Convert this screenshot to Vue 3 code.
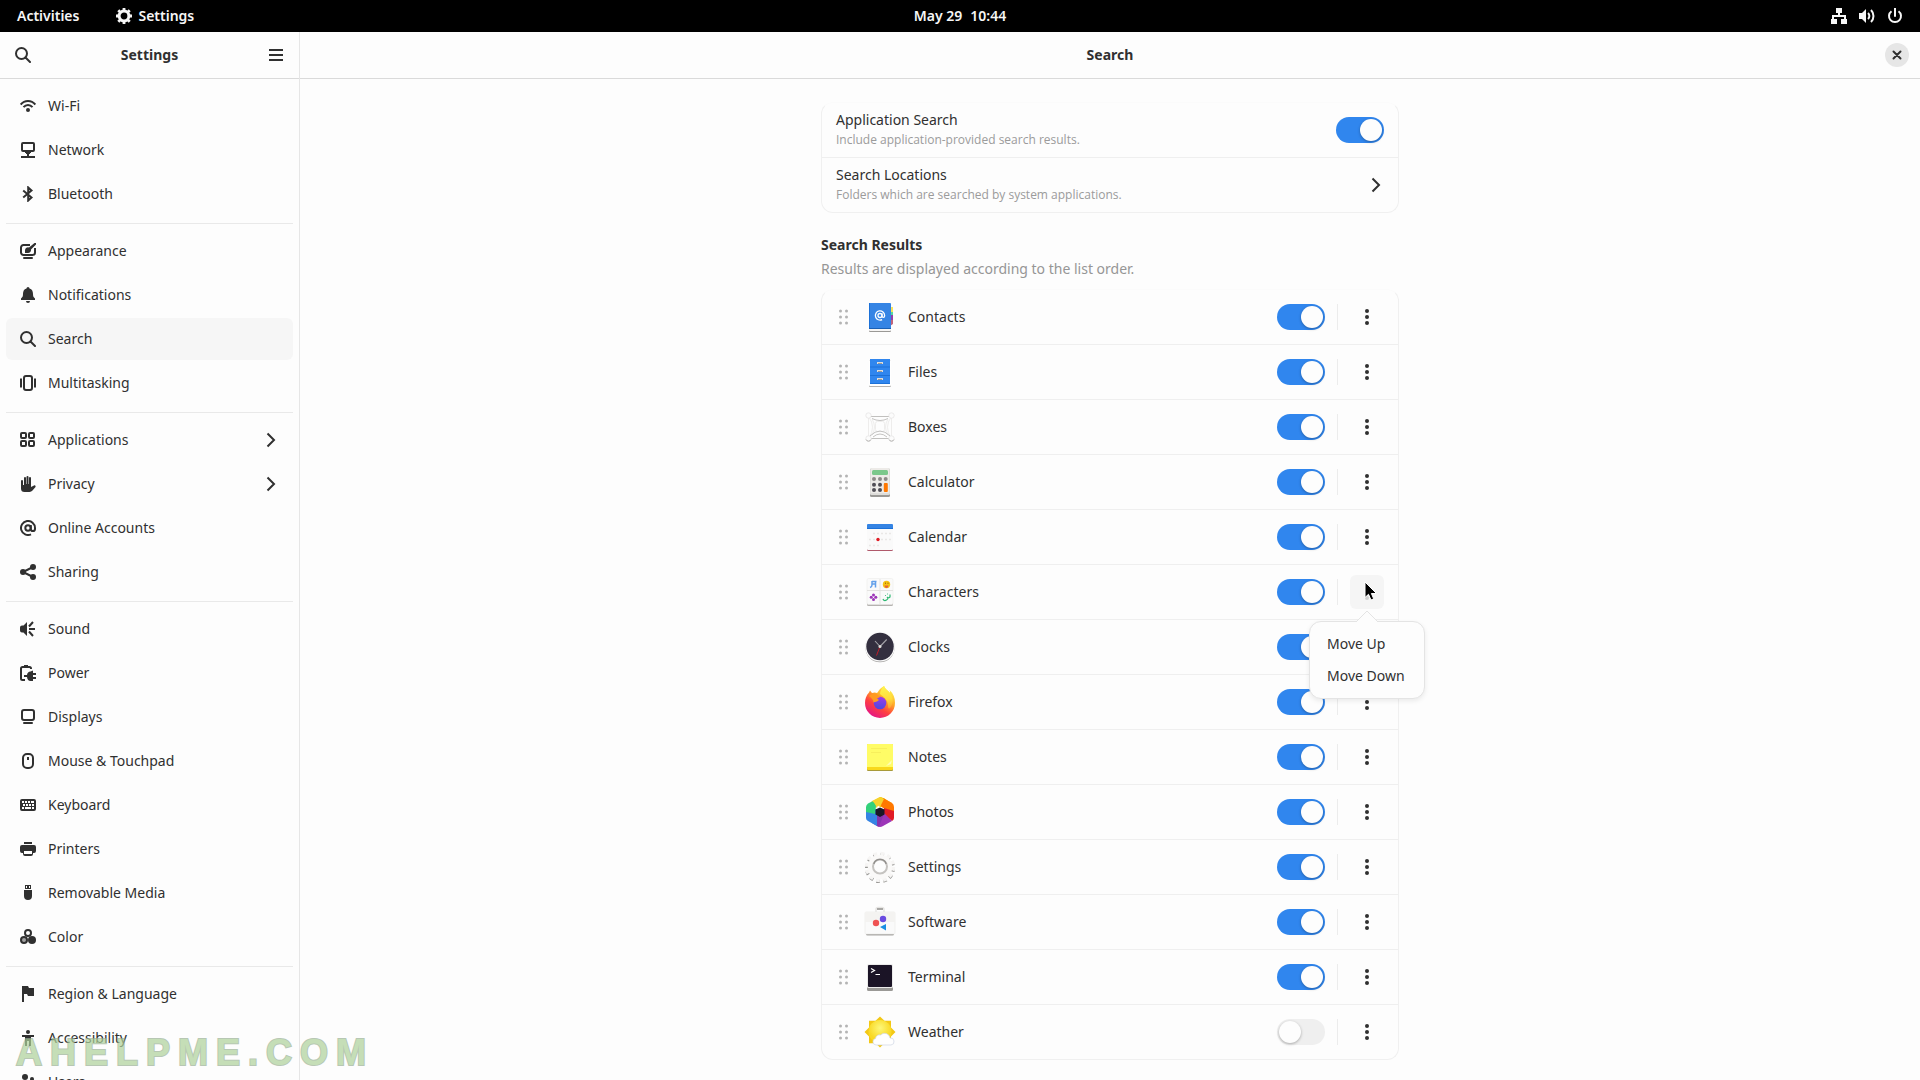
<template>
  <div class="desktop">
    <header class="topbar">
      <div class="topbar-left">
        <button type="button" class="topbar-button">Activities</button>
        <button type="button" class="topbar-button">
          <svg class="icon" viewBox="0 0 16 16" v-html="icons.gear"></svg>
          Settings
        </button>
      </div>
      <button type="button" class="topbar-button clock">
        <span>May 29</span>
        <span>10:44</span>
      </button>
      <div class="topbar-right">
        <svg v-for="name in ['wired', 'volume', 'shutdown']" :key="name" class="icon" viewBox="0 0 16 16" v-html="icons[name]"></svg>
      </div>
    </header>

    <div class="window">
      <aside class="sidebar">
        <div class="headerbar sidebar-header">
          <button type="button" class="flat-button" aria-label="Search settings">
            <svg class="icon" viewBox="0 0 16 16" v-html="icons.search"></svg>
          </button>
          <h1 class="title">Settings</h1>
          <button type="button" class="flat-button" aria-label="Main menu">
            <svg class="icon" viewBox="0 0 16 16" v-html="icons.menu"></svg>
          </button>
        </div>
        <nav class="panels">
          <div v-for="(group, index) in panels" :key="index" class="panel-group">
            <a
              v-for="panel in group"
              :key="panel.label"
              href="#"
              class="panel-link"
              :class="{ active: panel.label === activePanel }"
              @click.prevent="activePanel = panel.label"
            >
              <svg class="icon" viewBox="0 0 16 16" v-html="icons[panel.icon]"></svg>
              <span class="panel-label">{{ panel.label }}</span>
              <svg v-if="panel.children" class="icon" viewBox="0 0 16 16" v-html="icons.chevron"></svg>
            </a>
          </div>
        </nav>
      </aside>

      <main class="content">
        <div class="headerbar content-header">
          <h2 class="title">Search</h2>
          <button type="button" class="close-button" aria-label="Close">
            <svg class="icon" viewBox="0 0 16 16" v-html="icons.close"></svg>
          </button>
        </div>

        <div class="page">
          <section class="card">
            <div class="row">
              <label class="row-text" for="app-search">
                <span class="row-title">Application Search</span>
                <span class="row-subtitle">Include application-provided search results.</span>
              </label>
              <input id="app-search" v-model="appSearch" type="checkbox" role="switch" class="switch" />
            </div>
            <a href="#" class="row" @click.prevent>
              <span class="row-text">
                <span class="row-title">Search Locations</span>
                <span class="row-subtitle">Folders which are searched by system applications.</span>
              </span>
              <svg class="icon" viewBox="0 0 16 16" v-html="icons.chevron"></svg>
            </a>
          </section>

          <div class="section-head">
            <h3 class="section-title">Search Results</h3>
            <p class="section-text">Results are displayed according to the list order.</p>
          </div>

          <section class="card">
            <div v-for="(app, index) in apps" :key="app.name" class="row">
              <svg class="icon grip" viewBox="0 0 16 16" v-html="icons.grip"></svg>
              <svg class="app-icon" viewBox="0 0 32 32" v-html="appIcons[app.name]"></svg>
              <label class="app-name" :for="'app-' + index">{{ app.name }}</label>
              <input :id="'app-' + index" v-model="app.enabled" type="checkbox" role="switch" class="switch" />
              <span class="divider"></span>
              <div class="menu">
                <button
                  type="button"
                  class="menu-button"
                  :class="{ open: openMenu === app.name }"
                  :aria-label="app.name + ' options'"
                  @click="toggleMenu(app.name)"
                >
                  <svg class="icon" viewBox="0 0 16 16" v-html="icons.more"></svg>
                </button>
                <div v-if="openMenu === app.name" class="popover">
                  <svg class="popover-arrow" viewBox="0 0 22 12">
                    <path d="M0 12L11 1L22 12" fill="#fdfdfd" stroke="#e4e4e4" />
                  </svg>
                  <button type="button" class="popover-item" @click="move(index, -1)">Move Up</button>
                  <button type="button" class="popover-item" @click="move(index, 1)">Move Down</button>
                </div>
                <svg v-if="openMenu === app.name" class="pointer" viewBox="0 0 14 20">
                  <path d="M1 1V16.500L4.500 13.300L7 19L9.700 17.800L7.400 12.500H12.500Z" fill="#000" stroke="#fff" />
                </svg>
              </div>
            </div>
          </section>
        </div>
      </main>
    </div>

    <div class="watermark">AHELPME.COM</div>
  </div>
</template>

<script setup>
import { ref } from 'vue';

const activePanel = ref('Search');
const appSearch = ref(true);
const openMenu = ref('Characters');

const panels = [
  [
    { label: 'Wi-Fi', icon: 'wifi' },
    { label: 'Network', icon: 'network' },
    { label: 'Bluetooth', icon: 'bluetooth' },
  ],
  [
    { label: 'Appearance', icon: 'appearance' },
    { label: 'Notifications', icon: 'bell' },
    { label: 'Search', icon: 'search' },
    { label: 'Multitasking', icon: 'multitasking' },
  ],
  [
    { label: 'Applications', icon: 'grid', children: true },
    { label: 'Privacy', icon: 'hand', children: true },
    { label: 'Online Accounts', icon: 'at' },
    { label: 'Sharing', icon: 'share' },
  ],
  [
    { label: 'Sound', icon: 'sound' },
    { label: 'Power', icon: 'power' },
    { label: 'Displays', icon: 'display' },
    { label: 'Mouse & Touchpad', icon: 'mouse' },
    { label: 'Keyboard', icon: 'keyboard' },
    { label: 'Printers', icon: 'printer' },
    { label: 'Removable Media', icon: 'usb' },
    { label: 'Color', icon: 'color' },
  ],
  [
    { label: 'Region & Language', icon: 'flag' },
    { label: 'Accessibility', icon: 'person' },
    { label: 'Users', icon: 'users' },
  ],
];

const apps = ref([
  { name: 'Contacts', enabled: true },
  { name: 'Files', enabled: true },
  { name: 'Boxes', enabled: true },
  { name: 'Calculator', enabled: true },
  { name: 'Calendar', enabled: true },
  { name: 'Characters', enabled: true },
  { name: 'Clocks', enabled: true },
  { name: 'Firefox', enabled: true },
  { name: 'Notes', enabled: true },
  { name: 'Photos', enabled: true },
  { name: 'Settings', enabled: true },
  { name: 'Software', enabled: true },
  { name: 'Terminal', enabled: true },
  { name: 'Weather', enabled: false },
]);

const toggleMenu = (name) => {
  openMenu.value = openMenu.value === name ? '' : name;
};

const move = (index, step) => {
  const target = index + step;
  if (target >= 0 && target < apps.value.length) {
    const [app] = apps.value.splice(index, 1);
    apps.value.splice(target, 0, app);
  }
  openMenu.value = '';
};

const line = 'fill="none" stroke="currentColor" stroke-width="2"';

// 16px symbolic icons
const icons = {
  gear: `<circle cx="8" cy="8" r="4.900" fill="none" stroke="currentColor" stroke-width="3"/><path d="M8 0V3M8 13V16M0 8H3M13 8H16M2.300 2.300L4.500 4.500M11.500 11.500L13.700 13.700M2.300 13.700L4.500 11.500M11.500 4.500L13.700 2.300" fill="none" stroke="currentColor" stroke-width="2.800"/>`,
  wired: '<path d="M5 0h6v5H9v2h6v4h1v5h-6v-5h3V9H3v2h3v5H0v-5h1V7h6V5H5z" fill="currentColor"/>',
  volume: `<path d="M0 5h3l4-4v14l-4-4H0z" fill="currentColor"/><path d="M9 5a4 4 0 0 1 0 6" ${line}/><path d="M12 2a8.500 8.500 0 0 1 0 12" ${line}/>`,
  shutdown: `<path d="M4.500 3.200a6 6 0 1 0 7 0" ${line}/><path d="M8 0.500V8" ${line} stroke-linecap="round"/>`,
  search: `<circle cx="6.500" cy="6.500" r="5.500" ${line}/><path d="M10.500 10.500L15 15" ${line} stroke-linecap="round"/>`,
  menu: `<path d="M1 3h14M1 8h14M1 13h14" ${line}/>`,
  close: `<path d="M4.500 4.500l7 7M11.500 4.500l-7 7" ${line} stroke-linecap="round"/>`,
  chevron: `<path d="M4.500 1.500L11 8L4.500 14.500" ${line}/>`,
  more: '<g fill="currentColor"><circle cx="8" cy="2" r="2"/><circle cx="8" cy="8" r="2"/><circle cx="8" cy="14" r="2"/></g>',
  grip: '<g fill="currentColor"><circle cx="4.500" cy="2" r="1.500"/><circle cx="10.500" cy="2" r="1.500"/><circle cx="4.500" cy="8" r="1.500"/><circle cx="10.500" cy="8" r="1.500"/><circle cx="4.500" cy="14" r="1.500"/><circle cx="10.500" cy="14" r="1.500"/></g>',
  wifi: `<path d="M0.700 6.500C4.500 1.800 11.500 1.800 15.300 6.500" ${line}/><path d="M3.500 9.200C6 6.200 10 6.200 12.500 9.200" ${line}/><circle cx="8" cy="12" r="2" fill="currentColor"/>`,
  network: `<rect x="2" y="1" width="12" height="8" rx="1" ${line}/><path d="M5 9h6v2h-1v1H6v-1H5z" fill="currentColor"/><path d="M8 11V15M1 15H15" ${line}/>`,
  bluetooth: `<path d="M3.200 4.500L11.500 11.500L8.200 14.500V1.500L11.500 4.500L3.200 11.500" ${line}/>`,
  appearance: `<path d="M10 2H3.500A2.500 2.500 0 0 0 1 4.500v5A2.500 2.500 0 0 0 3.500 12h9A2.500 2.500 0 0 0 15 9.500V5" ${line}/><path d="M5 10V7a3 3 0 0 1 4-2.500L14.500 0H16v1.500L11 6.500A3 3 0 0 1 8 10z" fill="currentColor"/><path d="M4 15h8" ${line} stroke-linecap="round"/>`,
  bell: '<path d="M8 0a1.500 1.500 0 0 0-1.500 1.500C3.800 2.200 3 4.500 3 7c0 2.500-.5 3-2 4.500V13h14v-1.500C13.500 10 13 9.500 13 7c0-2.500-.8-4.800-3.500-5.500A1.500 1.500 0 0 0 8 0zM6 14a2 2 0 0 0 4 0z" fill="currentColor"/>',
  multitasking: `<rect x="4" y="1" width="8" height="14" rx="2" ${line}/><path d="M1 3.500v9M15 3.500v9" ${line}/>`,
  grid: `<g ${line}><rect x="1" y="1" width="5" height="5" rx="1"/><rect x="9" y="1" width="5" height="5" rx="1"/><rect x="1" y="9" width="5" height="5" rx="1"/><rect x="9" y="9" width="5" height="5" rx="1"/></g>`,
  hand: '<path d="M1 5a1 1 0 0 1 2 0v4h1V2a1 1 0 0 1 2 0v6h.5V1a1 1 0 0 1 2 0v7H9V2a1 1 0 0 1 2 0v9l3-1.500c1-.5 2 .5 1.500 1.500L12.500 14.500A4 4 0 0 1 9.500 16H4.500A3.500 3.500 0 0 1 1 12.500z" fill="currentColor"/>',
  at: `<circle cx="8" cy="8" r="2.700" ${line}/><path d="M10.800 5V9a2 2 0 0 0 4.200 0V8a7 7 0 1 0-4 6.300" ${line}/>`,
  share: `<path d="M13 3L3 8L13 13" ${line}/><g fill="currentColor"><circle cx="13" cy="3" r="3"/><circle cx="3" cy="8" r="3"/><circle cx="13" cy="13" r="3"/></g>`,
  sound: `<path d="M2 4.500h1.500L7 1v14L3.500 11.500H2A2 2 0 0 1 0 9.500v-3a2 2 0 0 1 2-2z" fill="currentColor"/><path d="M9 5.500L13 1M9 8h6M9 10.500L13 15" ${line}/>`,
  power: `<path d="M11 4V3.500A1.500 1.500 0 0 0 9.500 2h-7A1.500 1.500 0 0 0 1 3.500v10A1.500 1.500 0 0 0 2.500 15H5" ${line}/><path d="M4 0h4v2H4zM4 10h3c.3-2 1.500-3.500 3.500-3.500L13 5.500V8h3v2h-3v2h3v2h-3v2h-2.500C8.500 16 7.300 14.500 7 12H4z" fill="currentColor"/>`,
  display: `<rect x="2" y="1" width="12" height="10" rx="2" ${line}/><path d="M4 14h8" ${line} stroke-linecap="round"/>`,
  mouse: `<rect x="3" y="1" width="10" height="14" rx="4" ${line}/><path d="M8 4v3" ${line}/>`,
  keyboard: '<path fill-rule="evenodd" d="M2 2h12a2 2 0 0 1 2 2v8a2 2 0 0 1-2 2H2a2 2 0 0 1-2-2V4a2 2 0 0 1 2-2zM2 4v2h2V4zm3 0v2h2V4zm3 0v2h2V4zm3 0v2h3V4zM3 7v2h2V7zm3 0v2h2V7zm3 0v2h2V7zm3 0v2h2V7zM2 10v2h2v-2zm3 0v2h6v-2zm7 0v2h2v-2z" fill="currentColor"/>',
  printer: '<path fill-rule="evenodd" d="M4 1h8v2H4zM2 4h12a2 2 0 0 1 2 2v4a2 2 0 0 1-2 2h-1v1a2 2 0 0 1-2 2H5a2 2 0 0 1-2-2v-1H2a2 2 0 0 1-2-2V6a2 2 0 0 1 2-2zM4 10v3h8v-3z" fill="currentColor"/>',
  usb: '<path fill-rule="evenodd" d="M5 0h6v4H5zM6 1v2h1V1zm3 0v2h1V1zM4 5h8v6a4 4 0 0 1-8 0z" fill="currentColor"/>',
  color: `<circle cx="8" cy="4" r="3" ${line}/><circle cx="4" cy="11" r="3" ${line}/><circle cx="4" cy="11" r="3" fill="currentColor" opacity=".45"/><circle cx="12" cy="11" r="4" fill="currentColor"/>`,
  flag: '<path d="M2 0h6l1 2h5v8H8L7 8H4v8H2z" fill="currentColor"/>',
  person: '<circle cx="8" cy="2" r="2" fill="currentColor"/><path d="M2 5h12v2h-3v9H9v-5H7v5H5V7H2z" fill="currentColor"/>',
  users: '<circle cx="5" cy="3" r="3" fill="currentColor"/><circle cx="12" cy="5" r="2" fill="currentColor"/><path d="M0 13V10a3 3 0 0 1 3-3h4a3 3 0 0 1 3 3v3zM11 13v-3l-1-2h3a3 3 0 0 1 3 3v2z" fill="currentColor"/>',
};

// 32px application icons
const appIcons = {
  Contacts: `
    <path d="M26 6h3v5h-3z" fill="#f8e45c"/><path d="M26 11h3v4h-3z" fill="#57d8a0"/><path d="M26 14h3v5h-3z" fill="#9141ac"/><path d="M26 19h3v4l-3 2z" fill="#c0647c"/>
    <rect x="5" y="3" width="22" height="28" rx="1" fill="#9a9996"/><rect x="5" y="3" width="22" height="27" rx="1" fill="#f6f5f4"/>
    <rect x="5" y="2" width="22" height="26" rx="1" fill="#3584e4"/><path d="M5 27h22v1H5z" fill="#1a5fb4"/><path d="M5 2h1v25H5z" fill="#1c71d8"/>
    <g fill="none" stroke="#fff" stroke-width="1.300"><circle cx="16" cy="14.500" r="2"/><path d="M18 12.300v2.700a1.300 1.300 0 0 0 2.600 0v-.5a4.600 4.600 0 1 0-2.500 4.100"/></g>`,
  Files: `
    <rect x="5" y="4" width="22" height="27" rx="1" fill="#b5b3b0"/><rect x="5" y="4" width="22" height="26" rx="1" fill="#fff"/>
    <path d="M6 3h20v25H6z" fill="#3086ee"/><path d="M6 10.500h20v1H6zM6 19h20v1H6zM6 27h20v1H6z" fill="#1c71d8"/>
    <path d="M13 6h6v2h-6zM13 14h6v2h-6zM13 22h6v2h-6z" fill="#deddda"/><path d="M14 7h4v1h-4zM14 15h4v1h-4zM14 23h4v1h-4z" fill="#9a9996"/>`,
  Boxes: `
    <g fill="none" stroke="#eeedec"><rect x="4.500" y="5.500" width="23" height="22"/><rect x="11.500" y="10.500" width="9" height="10" rx="2"/><path d="M5 6Q12 16 5 27M27 6Q20 16 27 27M8 8Q13 16 8 24M24 8Q19 16 24 24"/></g>
    <path d="M6 5.500h20M8 7.500q8 4 16 0M6 27.500h20M6 25q10-10 20 0M9 26q7-6 14 0" fill="none" stroke="#b5b4b2" stroke-width=".8"/>
    <g fill="#fcfcfc" stroke="#e4e3e2" stroke-width=".7"><circle cx="4.500" cy="4.500" r="2.700"/><circle cx="27.500" cy="4.500" r="2.700"/><circle cx="4.500" cy="27.500" r="2.700"/><circle cx="27.500" cy="27.500" r="2.700"/></g>
    <path d="M2 28.500a2.700 2.700 0 0 0 5 0M25 28.500a2.700 2.700 0 0 0 5 0" fill="none" stroke="#a9a8a6" stroke-width=".8"/>`,
  Calculator: `
    <rect x="6" y="3" width="20" height="28" rx="1.500" fill="#9a9996"/><rect x="6" y="2" width="20" height="27" rx="1.500" fill="#deddda"/><rect x="7" y="2" width="18" height="25" rx="1" fill="#edebe8"/>
    <rect x="8" y="4" width="16" height="5" rx="1.500" fill="#7bc88b"/>
    <g fill="#8d8a88"><circle cx="10" cy="13" r="2"/><circle cx="16" cy="13" r="2"/><circle cx="21.700" cy="13" r="2"/></g>
    <g fill="#504e55"><circle cx="10" cy="18.700" r="2"/><circle cx="16" cy="18.700" r="2"/><circle cx="10" cy="24" r="2"/><circle cx="16" cy="24" r="2"/></g>
    <rect x="19.800" y="17" width="4" height="9" rx="1" fill="#ff7800"/>`,
  Calendar: `
    <rect x="3" y="4" width="26" height="26" rx="1.500" fill="#b0596b"/><rect x="3" y="4" width="26" height="25" rx="1" fill="#fafafa"/>
    <path d="M4 3h24a1 1 0 0 1 1 1v4H3V4a1 1 0 0 1 1-1z" fill="#3584e4"/><path d="M3 7h26v1H3z" fill="#1c71d8"/>
    <path d="M9 12.500h18M5 18.500h22M5 24.500h10" fill="none" stroke="#e9e8e6" stroke-width="1.500" stroke-dasharray="2 2"/><circle cx="14" cy="18.500" r="1.700" fill="#e01b24"/>`,
  Characters: `
    <rect x="3" y="4" width="26" height="26" rx="1.500" fill="#b5b3b0"/><rect x="3" y="2.500" width="26" height="26" rx="1.500" fill="#fafafa" stroke="#e9e8e6" stroke-width=".5"/>
    <path d="M3 14.500h26M16 3v25" stroke="#e4e3e1" fill="none"/>
    <path d="M8 5v4q0 2-2 2.500M8 5.500h4.500M8 8h4M11.500 5v6.500" stroke="#62a0ea" stroke-width="1.500" fill="none"/>
    <circle cx="22.500" cy="8.500" r="3.700" fill="#f5c211"/><path d="M20.500 9.500h4q-.5 2.500-2 2.500t-2-2.500z" fill="#e5603a"/><path d="M21 7.200h1M23.500 7.200h1" stroke="#8a5a00" fill="none"/>
    <g fill="#9c35b8"><circle cx="9.500" cy="19" r="1.500"/><circle cx="9.500" cy="23.500" r="1.500"/><circle cx="7.200" cy="21.300" r="1.500"/><circle cx="11.800" cy="21.300" r="1.500"/></g>
    <path d="M19 23q1 2.500 3.500 1T23 21q1 1.500 3 0v-2.500M21 19.500h.8M23 18h.8" stroke="#2eb872" stroke-width="1.200" fill="none"/>`,
  Clocks: `
    <circle cx="16" cy="16.500" r="14.700" fill="#a3a2a0"/><circle cx="16" cy="15.700" r="14.900" fill="#fafafa"/><circle cx="16" cy="15.500" r="13.700" fill="#332f3f"/>
    <path d="M16 15.500L11 10M16 15.500L22.700 8.500" stroke="#a3a2a8" stroke-width="1.100" fill="none"/><path d="M16 15.500L12.500 24.500" stroke="#c01c28" fill="none"/><circle cx="16" cy="15.500" r="1.500" fill="#deddda"/>`,
  Firefox: `
    <defs>
      <linearGradient id="fox" x1=".85" y1=".1" x2=".3" y2="1"><stop offset="0" stop-color="#fff44f"/><stop offset=".35" stop-color="#ffa725"/><stop offset=".65" stop-color="#ff4040"/><stop offset="1" stop-color="#e31587"/></linearGradient>
      <linearGradient id="flame" x1=".5" y1="0" x2=".6" y2="1"><stop offset="0" stop-color="#fff44f"/><stop offset=".6" stop-color="#ffdc3a"/><stop offset="1" stop-color="#ffa030"/></linearGradient>
      <linearGradient id="globe" x1=".6" y1="0" x2=".4" y2="1"><stop offset="0" stop-color="#a13be8"/><stop offset="1" stop-color="#4a4ae0"/></linearGradient>
    </defs>
    <path d="M20 0c1 3 4 4.500 6 7 0-1 0-2-.5-3 4 3.500 5.700 8 5.500 13A15 15 0 0 1 1 17c0-4 1.200-7.500 4-10.500l1-2 2 2.500c2-.8 3.500-.8 5 0 1-.8 2-3 3-4 1-1 2.500-2 4-3z" fill="url(#fox)"/>
    <path d="M20 0c1 3 4 4.500 6 7 4 5 3.500 11 0 15-1.500 1-2 0-2-3-.5-5-4-8-8-11 0-3 2-6 4-8z" fill="url(#flame)"/>
    <circle cx="16" cy="17" r="6.300" fill="url(#globe)"/>
    <path d="M5 10c2.500-2.500 6-3 9-1l2 2-3 1.500 2 1.500c-1.500 2-4 1.500-5.500 2.500 0-3-2-4.500-4.500-6.500z" fill="#ff9a20"/>`,
  Notes: `
    <rect x="3" y="4" width="26" height="26" rx="1" fill="#a89a3a"/><rect x="3" y="3" width="26" height="26" rx="1" fill="#f8d81c"/><path d="M4 3h24a1 1 0 0 1 1 1v22H3V4a1 1 0 0 1 1-1z" fill="#fffc66"/>
    <path d="M7 7.500h16M7 11.500h10" stroke="#f7ef5c" fill="none"/><path d="M28 19l-1 4-5 2z" fill="#fffdb8"/>`,
  Photos: `
    <path d="M7 6L16 1l5 2-9 9z" fill="#f6d32d"/><path d="M16 1c3 0 8 4 12 6v4L16 11z" fill="#f9c600"/><path d="M19 2l9 5q2 1.500 2 4v5l-11-4-3-3z" fill="#ff7800"/><path d="M20 12l10 3v7q0 2-2 3l-8-6z" fill="#e01b24"/>
    <path d="M20 17l8 8-9 5q-3 2-6 0l2-11z" fill="#9c35b8"/><path d="M12 18l8 0-5 12.500q-1 0-2-.5L8 27z" fill="#8434ac"/><path d="M13 13l0 17-9-5q-2-1-2-3v-7z" fill="#3584e4"/><path d="M12 10l-1 8-9-2v-5q0-2 2-3.500L9 5z" fill="#33d17a"/>
    <path d="M8 5l8-4 4 2-4 8z" fill="#f6d32d"/><path d="M16 11.500l4.500 2v5L16 21l-4.500-2.500v-5z" fill="#1b1726"/>`,
  Settings: `
    <circle cx="16" cy="17.200" r="13.300" fill="none" stroke="#9a9996" stroke-width="3.400" stroke-dasharray="3.500 3.464"/>
    <circle cx="16" cy="16" r="13.300" fill="none" stroke="#f6f5f4" stroke-width="3.800" stroke-dasharray="3.700 3.264"/>
    <circle cx="16" cy="16" r="12.200" fill="#faf9f8"/><circle cx="16" cy="15.500" r="7" fill="#fdfdfd" stroke="#c5c3c0" stroke-width="2"/><path d="M9.800 13a6.500 6.500 0 0 1 12.400 0" fill="none" stroke="#908e8b" stroke-width="1.300"/>`,
  Software: `
    <path d="M12 6V3.500a2 2 0 0 1 2-2h4a2 2 0 0 1 2 2V6" fill="none" stroke="#e6e5e3" stroke-width="1.500"/><path d="M13 2h6v2h-6z" fill="#a9a8a5"/>
    <rect x="2" y="7" width="28" height="22.500" rx="1.500" fill="#a9a8a5"/><rect x="1" y="6" width="30" height="22" rx="1" fill="#fafafa" stroke="#e6e5e3" stroke-width=".5"/><path d="M1 6h30v10H1z" fill="#f4f3f1"/>
    <circle cx="12" cy="17" r="3.200" fill="#ef5353"/><circle cx="19" cy="13" r="3.200" fill="#6a4be0"/><path d="M22 18v6.500L16 21z" fill="#1a8fe3"/>`,
  Terminal: `
    <rect x="3" y="5" width="26" height="25" rx="1.500" fill="#9a9996"/><rect x="3" y="3" width="26" height="24" rx="1.500" fill="#ebebea"/><rect x="4" y="4" width="24" height="22" rx="1" fill="#1b1426"/>
    <path d="M7 7.500l3.500 2L7 11.500M11.500 13.500h4.500" stroke="#fff" stroke-width="1.200" fill="none"/>`,
  Weather: `
    <defs><radialGradient id="sun" cy=".35"><stop offset="0" stop-color="#fdf77a"/><stop offset="1" stop-color="#f9d923"/></radialGradient></defs>
    <path d="M16 0.500l4.500 4.300H27v6.700l4.500 4.500-4.500 4.500v6.700h-6.500L16 31.500l-4.500-4.300H5v-6.700L.5 16 5 11.500V4.800h6.500z" fill="#f3c816"/><circle cx="16" cy="15.500" r="11.500" fill="url(#sun)"/>
    <path d="M12 29a3.300 3.300 0 0 1-.5-6.500 4 4 0 0 1 5-3.500 5.500 5.500 0 0 1 9.500 3 3.500 3.500 0 0 1 1 7z" fill="#fff" stroke="#cfd6e4" stroke-width=".7"/>`,
};
</script>

<style>
body {
  margin: 0;
  background-color: #fdfdfd;
}
</style>

<style scoped>
.desktop {
  position: relative;
  display: flex;
  flex-direction: column;
  height: 100vh;
  overflow: hidden;
  background-color: #fdfdfd;
  color: #303030;
  font-family: "Noto Sans", "Open Sans", sans-serif;
  font-size: 14px;
  line-height: 20px;
}

button {
  padding: 0;
  border: none;
  background: none;
  color: inherit;
  font: inherit;
  cursor: pointer;
}

a {
  color: inherit;
  text-decoration: none;
}

h1,
h2,
h3,
p {
  margin: 0;
}

.icon {
  display: block;
  width: 16px;
  height: 16px;
  flex: none;
}

.topbar {
  display: grid;
  grid-template-columns: 1fr auto 1fr;
  align-items: center;
  height: 32px;
  flex: none;
  padding: 0 17px;
  background-color: #000;
  color: #f6f6f6;
}

.topbar-left,
.topbar-right,
.topbar-button {
  display: flex;
  align-items: center;
}

.topbar-left {
  gap: 37px;
}

.topbar-button {
  gap: 6px;
  font-weight: 600;
}

.topbar-right {
  justify-content: flex-end;
  gap: 12px;
}

.clock {
  gap: 8px;
}

.window {
  display: grid;
  grid-template-columns: 300px 1fr;
  flex: 1;
  min-height: 0;
}

.sidebar,
.content {
  display: flex;
  flex-direction: column;
  min-height: 0;
}

.sidebar {
  border-right: 1px solid #e6e6e6;
}

.headerbar {
  display: grid;
  align-items: center;
  height: 46px;
  flex: none;
  border-bottom: 1px solid #dadada;
}

.sidebar-header {
  grid-template-columns: 34px 1fr 34px;
  padding: 0 6px;
}

.content-header {
  grid-template-columns: 24px 1fr 24px;
  padding: 0 11px;
}

.title {
  grid-column: 2;
  font-size: 14px;
  font-weight: 700;
  text-align: center;
}

.flat-button {
  display: grid;
  place-items: center;
  height: 34px;
}

.close-button {
  display: grid;
  place-items: center;
  width: 24px;
  height: 24px;
  border-radius: 50%;
  background-color: #e6e6e6;
}

.panels {
  flex: 1;
  min-height: 0;
  padding: 6px 6px 0;
  overflow-y: auto;
  scrollbar-width: none;
}

.panel-group {
  display: flex;
  flex-direction: column;
  gap: 2px;
}

.panel-group + .panel-group {
  margin-top: 8px;
  padding-top: 6px;
  border-top: 1px solid #e9e9e9;
}

.panel-link {
  display: flex;
  align-items: center;
  gap: 12px;
  height: 42px;
  padding: 0 14px;
  border-radius: 6px;
}

.panel-link.active {
  background-color: #f6f6f6;
}

.panel-label {
  flex: 1;
}

.page {
  flex: 1;
  min-height: 0;
  padding: 23px 24px 20px;
  overflow-y: auto;
  scrollbar-width: none;
}

.card {
  box-sizing: border-box;
  max-width: 578px;
  margin: 0 auto;
  border: 1px solid #f0f0f0;
  border-top-color: #fbfbfb;
  border-radius: 12px;
}

.row {
  display: flex;
  align-items: center;
  gap: 12px;
  height: 54px;
  padding: 0 14px;
}

.row + .row {
  border-top: 1px solid #efefef;
}

.row-text {
  display: flex;
  flex-direction: column;
  flex: 1;
}

.row-subtitle {
  color: #9b9b9b;
  font-family: "Open Sans", "Noto Sans", sans-serif;
  font-size: 12px;
  line-height: 20px;
}

.section-head {
  max-width: 578px;
  height: 76px;
  margin: 0 auto;
  padding-top: 21px;
  box-sizing: border-box;
}

.section-title {
  font-size: 14px;
  font-weight: 700;
  line-height: 22px;
}

.section-text {
  color: #969696;
  line-height: 26px;
}

.grip {
  color: #b4b4b4;
}

.app-icon {
  width: 32px;
  height: 32px;
  flex: none;
}

.app-name {
  flex: 1;
}

.switch {
  appearance: none;
  box-sizing: border-box;
  display: flex;
  width: 48px;
  height: 26px;
  flex: none;
  margin: 0;
  padding: 2px;
  border-radius: 13px;
  background-color: #efefef;
  cursor: pointer;
}

.switch::before {
  content: "";
  width: 22px;
  height: 22px;
  border-radius: 50%;
  background-color: #fdfdfd;
  box-shadow: 0 1px 3px rgba(0, 0, 0, 0.3);
}

.switch:checked {
  justify-content: flex-end;
  background-color: #3086ee;
}

.divider {
  width: 1px;
  height: 26px;
  background-color: #ececec;
}

.menu {
  position: relative;
}

.menu-button {
  display: grid;
  place-items: center;
  width: 34px;
  height: 34px;
  border-radius: 6px;
}

.menu-button.open {
  background-color: #f5f5f5;
  color: #d0d0d0;
}

.popover {
  position: absolute;
  z-index: 2;
  top: 46px;
  left: 50%;
  box-sizing: border-box;
  width: 116px;
  padding: 6px;
  transform: translateX(-50%);
  border: 1px solid #e4e4e4;
  border-radius: 12px;
  background-color: #fdfdfd;
  box-shadow: 0 2px 5px rgba(0, 0, 0, 0.08);
}

.popover-arrow {
  position: absolute;
  top: -12px;
  left: 50%;
  width: 22px;
  height: 12px;
  transform: translateX(-50%);
}

.popover-item {
  display: block;
  width: 100%;
  height: 32px;
  padding: 0 11px;
  text-align: left;
  white-space: nowrap;
}

.pointer {
  position: absolute;
  z-index: 3;
  top: 6px;
  left: 14px;
  width: 14px;
  height: 20px;
  pointer-events: none;
}

.watermark {
  position: absolute;
  bottom: 7px;
  left: 16px;
  z-index: 4;
  color: #aed29a;
  font-family: "Liberation Sans", sans-serif;
  font-size: 36px;
  font-weight: 700;
  line-height: 40px;
  letter-spacing: 8px;
  opacity: 0.7;
  -webkit-text-stroke: 2px #9ab195;
  paint-order: stroke fill;
  pointer-events: none;
}
</style>
